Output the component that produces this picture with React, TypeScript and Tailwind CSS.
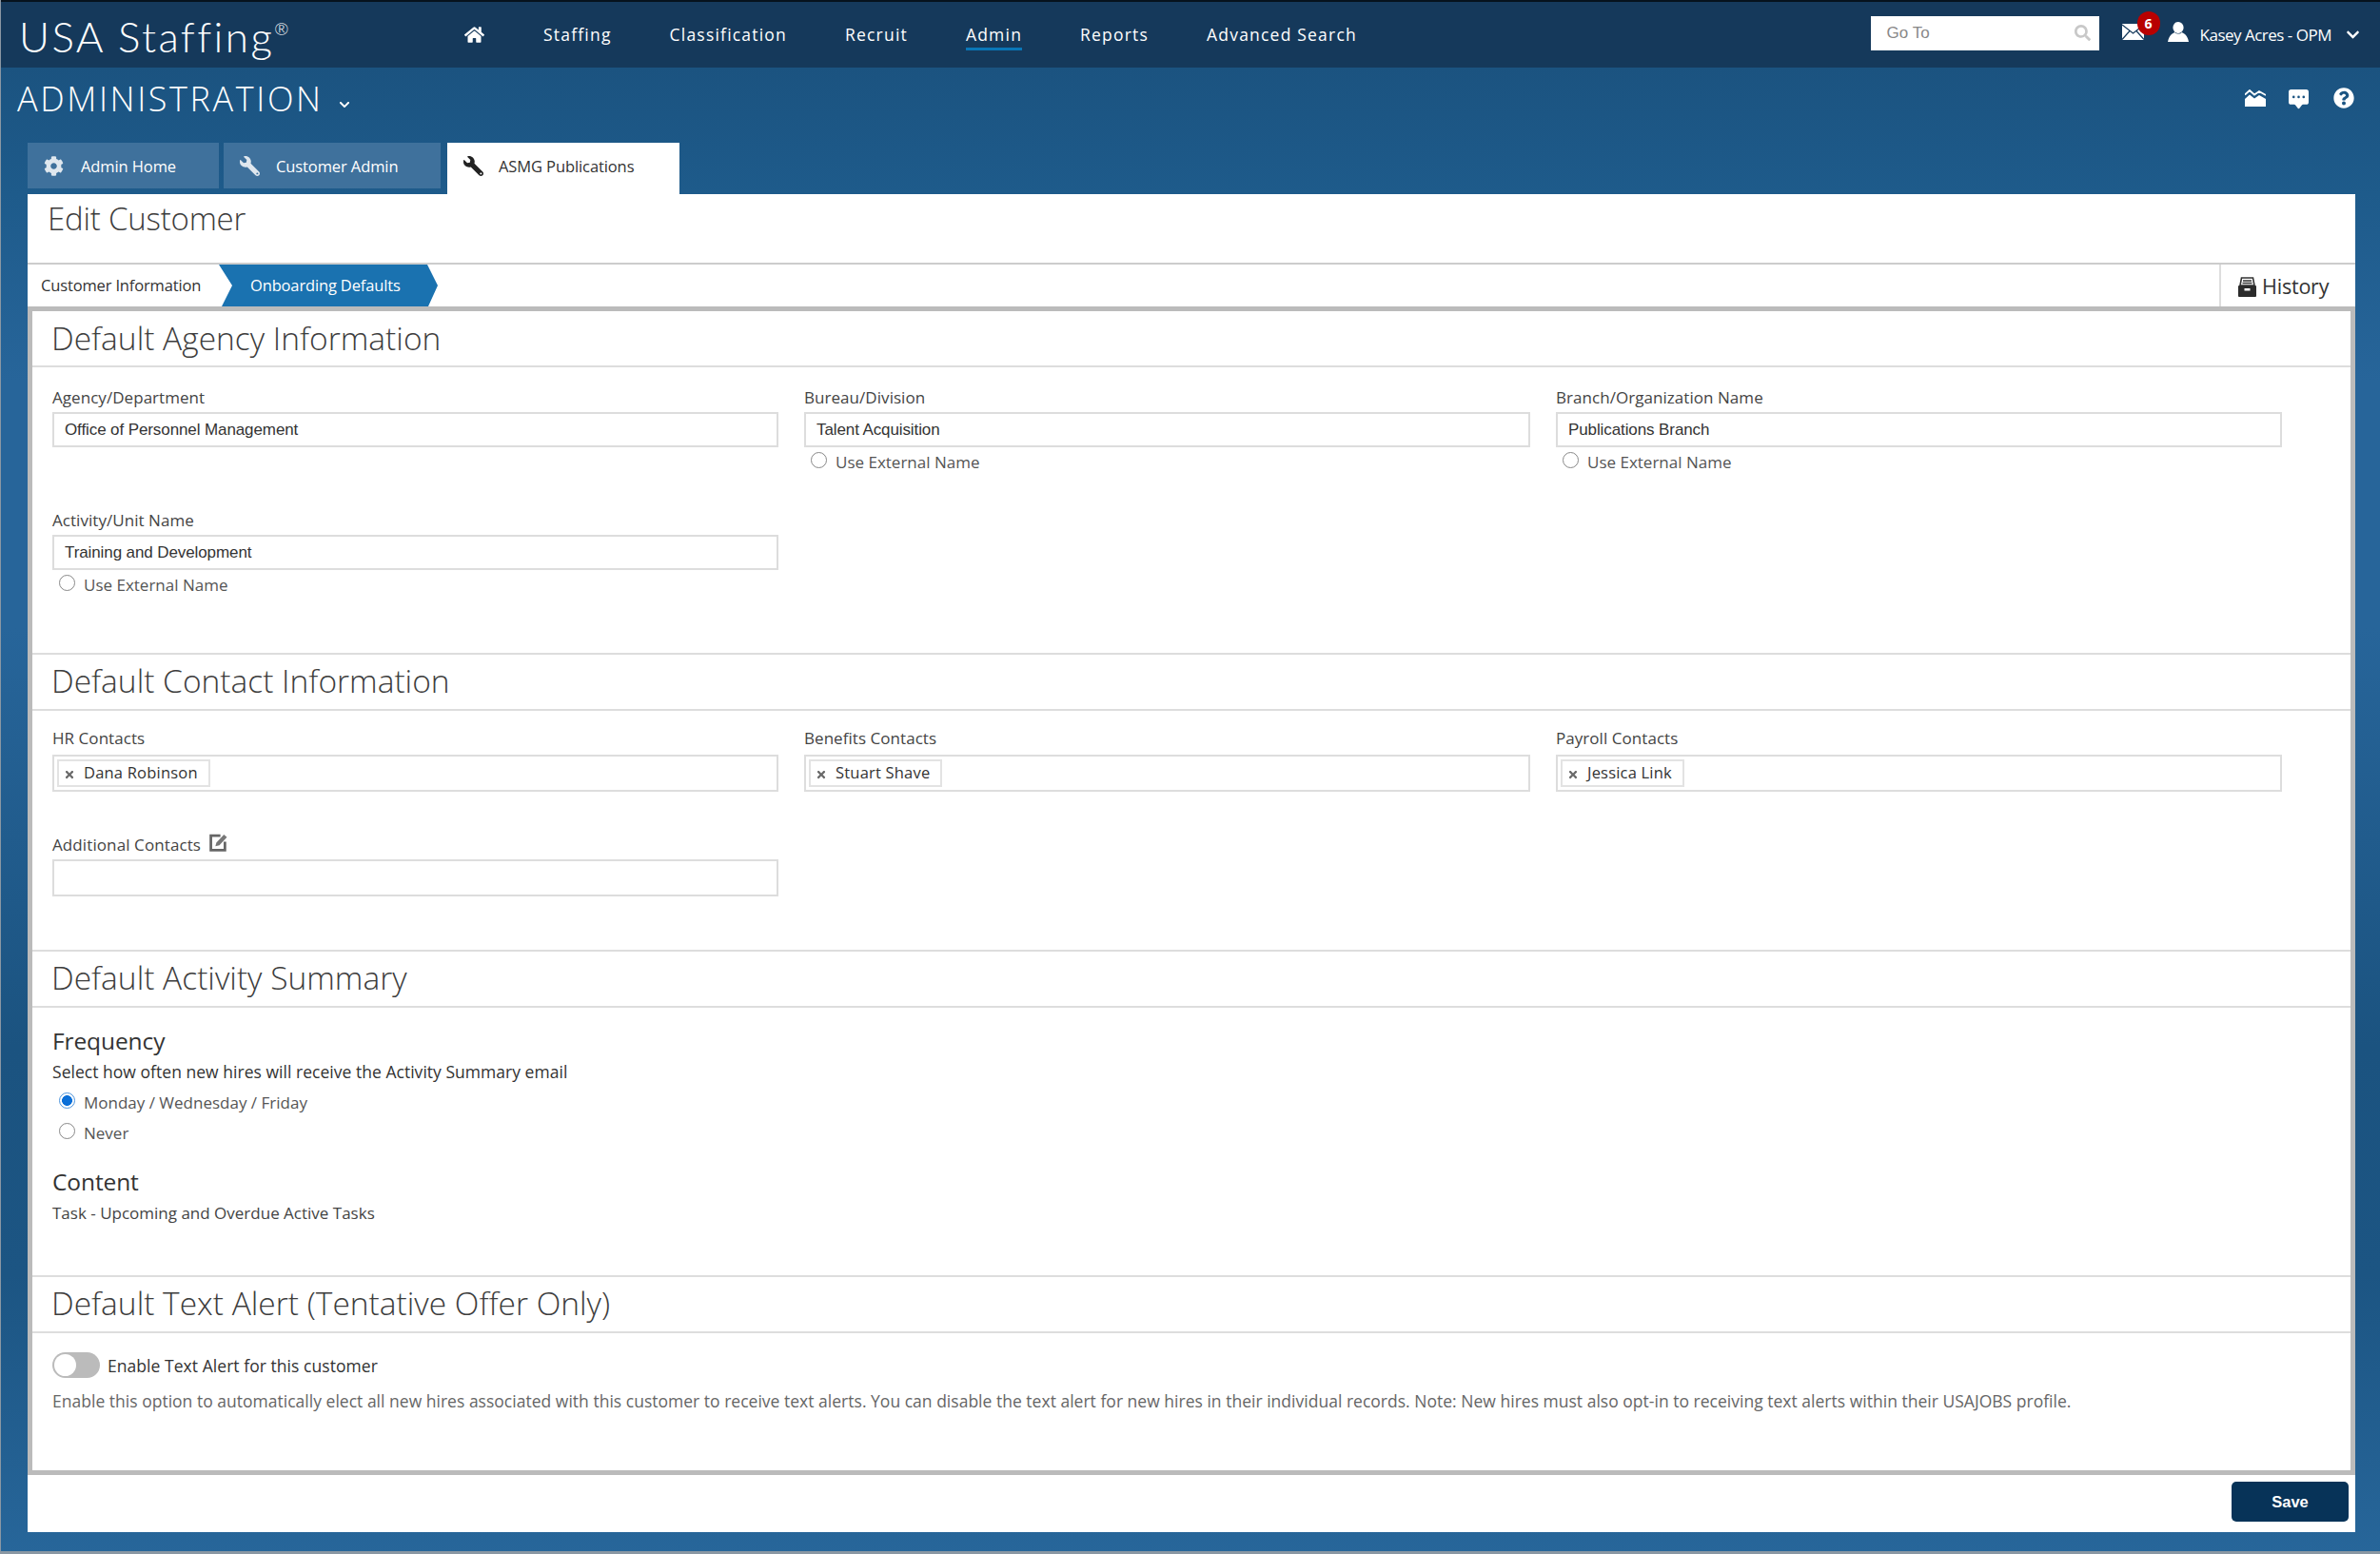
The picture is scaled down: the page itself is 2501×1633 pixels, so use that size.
import { FaChevronDown, FaCog, FaHome, FaQuestionCircle, FaSearch, FaTimes, FaWrench } from 'react-icons/fa';
import { BsChatSquareDotsFill } from 'react-icons/bs';
import type { ReactNode } from 'react';

const navItems = ['Staffing', 'Classification', 'Recruit', 'Admin', 'Reports', 'Advanced Search'];

function ChartIcon() {
  return (
    <svg width="22" height="18" viewBox="0 0 22 18" className="text-white">
      <path d="M0 5.5 L5 1 L10 5.5 L15 2 L22 6" fill="none" stroke="currentColor" strokeWidth="1.8" />
      <path d="M0 10 L5 5.5 L10 9.5 L15 6 L22 10 V18 H0 Z" fill="currentColor" />
    </svg>
  );
}

function EnvelopeIcon() {
  return (
    <svg width="23" height="17" viewBox="0 0 23 17" className="block">
      <rect width="23" height="17" fill="#fff" />
      <path d="M0 1 L11.5 10 L23 1 M0 16.5 L8 7.5 M23 16.5 L15 7.5" fill="none" stroke="#15395b" strokeWidth="1.2" />
    </svg>
  );
}

function UserIcon() {
  return (
    <svg width="22" height="21" viewBox="0 0 22 21" fill="#fff" className="block">
      <ellipse cx="11" cy="6" rx="5.6" ry="6" />
      <path d="M7.5 11 C8 13 14 13 14.5 11 C18 12.5 20.5 14 22 21 H0 C1.5 14 4 12.5 7.5 11 Z" />
    </svg>
  );
}

function HistoryIcon() {
  return (
    <svg width="19" height="21" viewBox="0 0 19 21">
      <path d="M3.5 1 H15.5 L17 9 H2 Z" fill="#fff" stroke="#333" strokeWidth="1.6" />
      <path d="M5 4 H14 M4.5 6.5 H14.5" stroke="#333" strokeWidth="1.3" />
      <rect y="9" width="19" height="12" rx="1" fill="#2b2b2b" />
      <rect x="6.5" y="12" width="6" height="2.5" fill="#fff" />
    </svg>
  );
}

function EditIcon() {
  return (
    <svg width="19" height="19" viewBox="0 0 18 18" className="block">
      <path d="M11 2 H1.5 V16.5 H15.5 V8" fill="none" stroke="#666" strokeWidth="2.6" />
      <path d="M6 12.5 L7 9 L14.5 1 L17.5 3.5 L10 11.5 Z" fill="#777" />
    </svg>
  );
}

function SectionHeader({ title, top = true }: { title: string; top?: boolean }) {
  return (
    <div
      className={`flex items-center border-b-2 border-[#ddd] pl-[20px] text-[33.5px] font-light leading-none text-[#3d3d3d] ${
        top ? 'h-[61px] border-t-2 pb-[1px]' : 'h-[59px]'
      }`}
    >
      {title}
    </div>
  );
}

function RadioRow({ label, checked = false }: { label: string; checked?: boolean }) {
  return (
    <label className="flex gap-[9px] pl-[7px] text-[17px] leading-[20px] text-[#555]">
      <input
        type="radio"
        checked={checked}
        readOnly
        className={`m-0 size-[17px] appearance-none rounded-full border-[1.5px] ${
          checked
            ? 'border-[#4d94dc] bg-[radial-gradient(circle,#0a6fd8_0,#0a6fd8_48%,#fff_54%)]'
            : 'border-[#888] bg-white'
        }`}
      />
      <span className="mt-[1px]">{label}</span>
    </label>
  );
}

function Field({ label, value, external = false }: { label: string; value: string; external?: boolean }) {
  return (
    <div>
      <div className="text-[17px] leading-[20px] tracking-[0.05px] text-[#444]">{label}</div>
      <input
        readOnly
        value={value}
        className="mt-[5px] mb-[5px] block h-[37px] w-full border-2 border-[#ddd] pl-[11px] font-['Liberation_Sans',sans-serif] text-[17px] tracking-[-0.1px] text-[#333]"
      />
      {external && <RadioRow label="Use External Name" />}
    </div>
  );
}

function ContactBox({ children }: { children?: ReactNode }) {
  return <div className="flex h-[39px] w-full items-center border-2 border-[#ddd] pl-[3px]">{children}</div>;
}

function ContactField({ label, name }: { label: string; name: string }) {
  return (
    <div>
      <div className="mb-[7px] text-[17px] leading-[20px] tracking-[0.05px] text-[#444]">{label}</div>
      <ContactBox>
        <span className="flex h-[29px] items-center gap-[9px] border-2 border-[#e3e3e3] pr-[11px] pl-[5px] text-[16.5px] tracking-[0.2px] text-[#333]">
          <FaTimes className="mt-[3px] size-[12px] text-[#6a6a6a]" />
          {name}
        </span>
      </ContactBox>
    </div>
  );
}

export default function App() {
  return (
    <div className="flex h-[1633px] w-[2501px] flex-col overflow-hidden border-b-[3px] border-l border-[#8a97a3] bg-[linear-gradient(180deg,#1b5380_71px,#1e5b8b_204px,#27659a_400px,#27659a_660px,#1b5380_1100px,#1c5583_1340px,#27669a_1633px)] font-['Open_Sans',sans-serif]">
      <header className="flex h-[71px] shrink-0 items-center border-t-2 border-[#06121d] bg-[#15395b] pl-[19px] text-white">
        <div className="mt-[3px] w-[285px] font-['Lato',sans-serif] text-[44px] leading-none font-light tracking-[2.4px] whitespace-nowrap">
          USA Staffing<sup className="-top-[18px] text-[18px]">®</sup>
        </div>
        <nav className="ml-[183px] flex items-center gap-[61px] text-[17.5px] font-medium tracking-[1.2px]">
          <FaHome className="mr-[1px] size-[21px]" />
          {navItems.map((item) => (
            <a key={item} className="relative">
              {item}
              {item === 'Admin' && <span className="absolute right-0 -bottom-[3px] left-0 h-[3px] bg-[#0a77b8]" />}
            </a>
          ))}
        </nav>
        <div className="mb-[4px] ml-auto flex h-[36px] w-[240px] items-center justify-between bg-white pr-[9px] pl-[17px] font-['Liberation_Sans',sans-serif] text-[17px] text-[#888]">
          Go To
          <FaSearch className="size-[17px] text-[#c8c8c8]" />
        </div>
        <div className="relative mb-[7px] ml-[24px]">
          <EnvelopeIcon />
          <span className="absolute -top-[13px] left-[16px] flex h-[25px] w-[24px] items-center justify-center rounded-full bg-[#b80000] text-[14px] font-bold">
            6
          </span>
        </div>
        <div className="mb-[6px] ml-[25px]">
          <UserIcon />
        </div>
        <span className="ml-[12px] text-[17px] tracking-[-0.5px]">Kasey Acres - OPM</span>
        <FaChevronDown className="mr-[21px] ml-[15px] size-[15px]" />
      </header>

      <div className="flex h-[79px] shrink-0 items-start pt-[13px] pl-[17px] text-white">
        <span className="text-[36px] leading-[40px] font-light tracking-[2.6px]">ADMINISTRATION</span>
        <FaChevronDown className="mt-[20px] ml-[16px] size-[12px]" />
        <div className="mt-[10px] mr-[27px] ml-auto flex items-start gap-[24px]">
          <ChartIcon />
          <BsChatSquareDotsFill className="size-[21px]" />
          <FaQuestionCircle className="-mt-[2px] ml-[2px] size-[22px]" />
        </div>
      </div>

      <div className="ml-[28px] flex h-[54px] shrink-0 items-start gap-[5px] text-[16.5px] tracking-[-0.1px]">
        <div className="flex h-[48px] w-[201px] items-center gap-[18px] bg-[#3f719c] pt-[3px] pl-[17px] text-white">
          <FaCog className="-mt-[3px] size-[21px] text-[#dfe7ee]" />
          Admin Home
        </div>
        <div className="flex h-[48px] w-[228px] items-center gap-[17px] bg-[#3f719c] pt-[3px] pl-[17px] text-white">
          <FaWrench className="-mt-[3px] size-[21px] -scale-x-100 text-[#dfe7ee]" />
          Customer Admin
        </div>
        <div className="ml-[2px] flex h-[54px] w-[244px] items-center gap-[16px] bg-white pb-[3px] pl-[17px] text-[#333]">
          <FaWrench className="-mt-[3px] size-[21px] -scale-x-100 text-[#222]" />
          ASMG Publications
        </div>
      </div>

      <main className="ml-[28px] h-[1406px] w-[2446px] shrink-0 bg-white">
        <div className="h-[74px] border-b-2 border-[#ccc] pt-[6px] pl-[21px] text-[33px] leading-[40px] font-light tracking-[-0.2px] text-[#3d3d3d]">
          Edit Customer
        </div>
        <div className="flex h-[44px] items-center text-[16.5px] tracking-[-0.15px]">
          <div className="w-[201px] pl-[14px] text-[#333]">Customer Information</div>
          <div className="flex h-[44px] w-[230px] items-center bg-[#1a72b0] pl-[33px] text-white [clip-path:polygon(0_0,219px_0,100%_50%,220px_100%,3px_100%,14px_50%)]">
            Onboarding Defaults
          </div>
          <div className="ml-auto flex h-[44px] w-[143px] items-center gap-[6px] border-l-2 border-[#ddd] pt-[3px] pl-[18px] text-[21.5px] tracking-[-0.2px] text-[#333]">
            <HistoryIcon />
            History
          </div>
        </div>

        <div className="h-[1228px] border-[5px] border-[#bbb]">
          <SectionHeader title="Default Agency Information" top={false} />
          <div className="h-[300px] pt-[22px] pl-[21px]">
            <div className="grid w-[2343px] grid-cols-3 auto-rows-[129px] gap-x-[27px]">
              <Field label="Agency/Department" value="Office of Personnel Management" />
              <Field label="Bureau/Division" value="Talent Acquisition" external />
              <Field label="Branch/Organization Name" value="Publications Branch" external />
              <Field label="Activity/Unit Name" value="Training and Development" external />
            </div>
          </div>

          <SectionHeader title="Default Contact Information" />
          <div className="h-[251px] pt-[19px] pl-[21px]">
            <div className="grid w-[2343px] grid-cols-3 auto-rows-[112px] gap-x-[27px]">
              <ContactField label="HR Contacts" name="Dana Robinson" />
              <ContactField label="Benefits Contacts" name="Stuart Shave" />
              <ContactField label="Payroll Contacts" name="Jessica Link" />
              <div>
                <div className="mb-[5px] flex h-[20px] items-center gap-[9px] text-[17px] leading-[20px] tracking-[0.1px] text-[#444]">
                  Additional Contacts
                  <span className="-mt-[6px]">
                    <EditIcon />
                  </span>
                </div>
                <ContactBox />
              </div>
            </div>
          </div>

          <SectionHeader title="Default Activity Summary" />
          <div className="h-[281px] pt-[20px] pl-[21px]">
            <div className="text-[24.5px] leading-[30px] font-medium tracking-[-0.1px] text-[#333]">Frequency</div>
            <div className="mt-[7px] text-[17.5px] leading-[20px] tracking-[0.03px] text-[#333]">
              Select how often new hires will receive the Activity Summary email
            </div>
            <div className="mt-[12px]">
              <RadioRow label="Monday / Wednesday / Friday" checked />
            </div>
            <div className="mt-[11px]">
              <RadioRow label="Never" />
            </div>
            <div className="mt-[26px] text-[24.5px] leading-[30px] font-medium tracking-[-0.1px] text-[#333]">Content</div>
            <div className="mt-[8px] text-[17px] leading-[20px] text-[#444]">
              Task - Upcoming and Overdue Active Tasks
            </div>
          </div>

          <SectionHeader title="Default Text Alert (Tentative Offer Only)" />
          <div className="pt-[20px] pl-[21px]">
            <div className="flex h-[27px] items-center gap-[8px] text-[17.5px] tracking-[0.05px] text-[#333]">
              <span className="flex h-[27px] w-[50px] items-center rounded-full bg-[#bbb] pl-[2px]">
                <span className="size-[23px] rounded-full bg-white" />
              </span>
              <span className="pt-[1px]">Enable Text Alert for this customer</span>
            </div>
            <p className="mt-[14px] text-[17.5px] leading-[20px] tracking-[0.015px] whitespace-nowrap text-[#666]">
              Enable this option to automatically elect all new hires associated with this customer to receive text
              alerts. You can disable the text alert for new hires in their individual records. Note: New hires must
              also opt-in to receiving text alerts within their USAJOBS profile.
            </p>
          </div>
        </div>

        <div className="flex justify-end pt-[7px] pr-[7px]">
          <button className="h-[42px] w-[123px] rounded-[5px] bg-[#073358] font-['Liberation_Sans',sans-serif] text-[16.5px] font-bold text-white">
            Save
          </button>
        </div>
      </main>
    </div>
  );
}
